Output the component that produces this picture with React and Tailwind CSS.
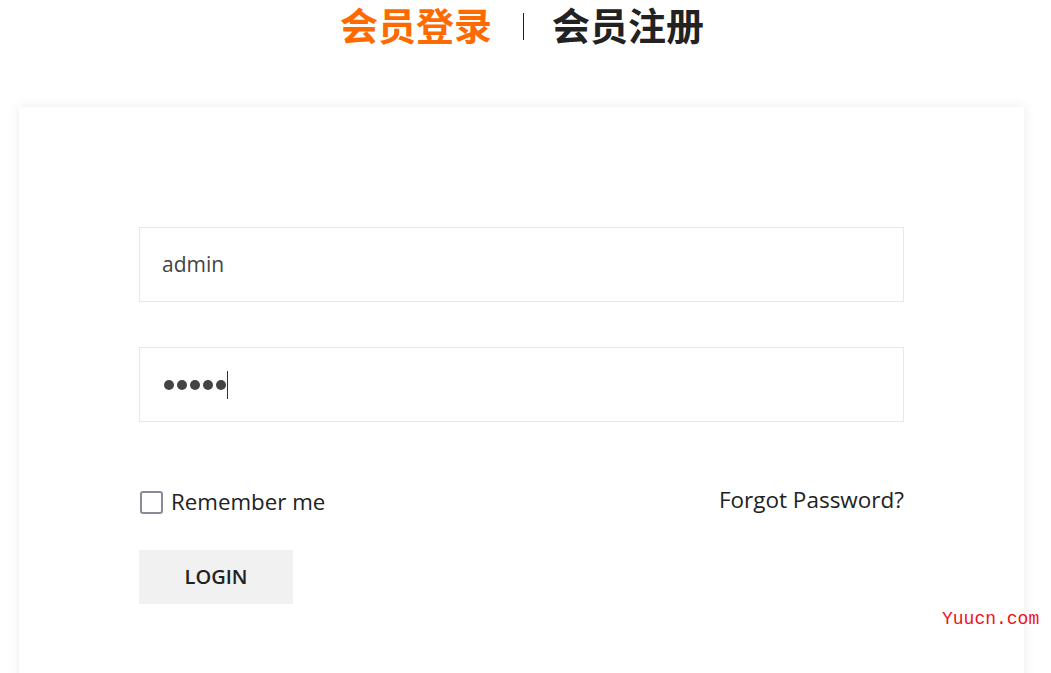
export default function App() {
  return (
    <div className="w-[1051px] h-[673px] overflow-hidden bg-white relative" style={{ fontFamily: '"Open Sans", "Noto Sans CJK SC", sans-serif' }}>
      <div className="h-[107px] flex justify-center">
        <div className="flex items-start h-[50px] pr-[7px]">
          <span className="text-[38px] leading-[48px] font-bold text-[#ff6a00] whitespace-nowrap" style={{ fontFamily: '"Noto Sans CJK SC", sans-serif' }}>会员登录</span>
          <span className="w-px h-[27px] bg-[#222] mt-[13px] ml-[31px] mr-[28px]"></span>
          <span className="text-[38px] leading-[48px] font-bold text-[#222] whitespace-nowrap" style={{ fontFamily: '"Noto Sans CJK SC", sans-serif' }}>会员注册</span>
        </div>
      </div>
      <div className="ml-[19px] w-[1005px] h-[600px] bg-white shadow-[0_0_12px_rgba(0,0,0,0.08)] px-[120px] pt-[120px]">
        <div className="h-[75px] border border-[#e8e8e8] flex items-center pl-[22px] text-[21px] text-[#444]">admin</div>
        <div className="h-[75px] mt-[45px] border border-[#e8e8e8] flex items-center pl-[24px]">
          <div className="flex items-center gap-[3px]">
            <span className="w-[10px] h-[10px] rounded-full bg-[#444]"></span>
            <span className="w-[10px] h-[10px] rounded-full bg-[#444]"></span>
            <span className="w-[10px] h-[10px] rounded-full bg-[#444]"></span>
            <span className="w-[10px] h-[10px] rounded-full bg-[#444]"></span>
            <span className="w-[10px] h-[10px] rounded-full bg-[#444]"></span>
          </div>
          <span className="w-px h-[28px] bg-[#333] ml-[1px]"></span>
        </div>
        <div className="mt-[65px] flex items-center justify-between h-[30px]">
          <div className="flex items-center">
            <span className="w-[23px] h-[23px] border-2 border-[#8b8a99] rounded-[3px] ml-[1px] mt-[1px]"></span>
            <span className="ml-[8px] text-[22.3px] text-[#222]">Remember me</span>
          </div>
          <span className="text-[22.5px] text-[#222] -mt-[4px]">Forgot Password?</span>
        </div>
        <div className="mt-[33px] w-[154px] h-[54px] bg-[#f1f1f1] flex items-center justify-center text-[20px] font-semibold text-[#222]">LOGIN</div>
      </div>
      <div className="absolute left-[942px] top-[606px] text-[18px] text-[#ee1122]" style={{ fontFamily: '"Liberation Mono", monospace' }}>Yuucn.com</div>
    </div>
  );
}
